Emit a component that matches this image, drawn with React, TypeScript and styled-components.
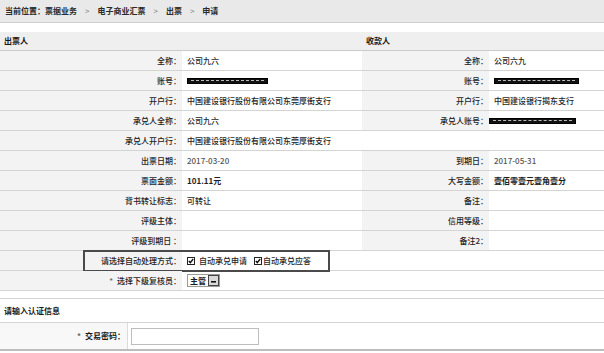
import React from "react";
import styled, { createGlobalStyle } from "styled-components";

const Global = createGlobalStyle`
  html, body { margin: 0; padding: 0; background: #fff; }
  body { font-family: "Noto Sans CJK SC", "Liberation Sans", sans-serif; font-size: 8px; color: #1e1e1e; }
  * { box-sizing: border-box; }
`;

const Page = styled.div`
  width: 604px;
  height: 353px;
  overflow: hidden;
  background: #fff;
  line-height: 1;
`;

const Breadcrumb = styled.div`
  height: 23px;
  background: #e9e9e9;
  border-bottom: 1px solid #cfcfcf;
  display: flex;
  align-items: center;
  padding-left: 5px;
  gap: 7px;
  font-weight: 700;
  color: #2a2a2a;
`;

const Crumb = styled.span``;
const Sep = styled.span`
  color: #777;
  font-weight: 400;
  padding: 0 1px;
`;

const SectionHeader = styled.div`
  margin-top: 9px;
  height: 19px;
  background: #efefef;
  border-bottom: 1px solid #cbcbcb;
  display: grid;
  grid-template-columns: 362px 1fr;
  align-items: center;
  font-weight: 700;
  color: #1a1a1a;
`;

const HeaderCell = styled.div`
  padding-left: 4px;
`;

const Row = styled.div`
  position: relative;
  display: grid;
  grid-template-columns: 182px 180px 127px 1fr;
  height: 20px;
  border-bottom: 1px solid #d4d4d4;
`;

const Label = styled.div`
  background: #f3f3f3;
  display: flex;
  align-items: center;
  justify-content: flex-end;
  padding-right: 1px;
  color: #222;
  font-weight: 500;
  white-space: nowrap;
`;

const Value = styled.div<{ $span?: number; $bold?: boolean; $muted?: boolean }>`
  grid-column: span ${(p) => p.$span ?? 1};
  display: flex;
  align-items: center;
  padding-left: 5px;
  white-space: nowrap;
  font-weight: ${(p) => (p.$bold ? 700 : 500)};
  color: ${(p) => (p.$muted ? "#555" : "#1e1e1e")};
`;

const Mask = styled.span<{ $w: number; $shift?: number }>`
  display: inline-block;
  width: ${(p) => p.$w}px;
  height: 6px;
  margin-left: ${(p) => p.$shift ?? 0}px;
  background: #111;
  border: 1px solid #000;
  position: relative;
  &::after {
    content: "";
    position: absolute;
    left: 3px;
    right: 3px;
    top: 1px;
    border-top: 1px dashed #bbb;
  }
`;

const Highlight = styled.div`
  position: absolute;
  left: 83px;
  top: -1px;
  width: 247px;
  height: 22px;
  border: 2px solid #4a4a4a;
  pointer-events: none;
`;

const Check = styled.label<{ $gap: number }>`
  display: inline-flex;
  align-items: center;
  gap: ${(p) => p.$gap}px;
  margin-right: 7px;
`;

const SelectBox = styled.span`
  display: inline-flex;
  align-items: center;
  height: 13px;
  border: 1px solid #9a9a9a;
  background: #fff;
  padding-left: 2px;
  gap: 2px;
  font-weight: 700;
  color: #1a1a1a;
`;

const SelectBtn = styled.span`
  width: 11px;
  height: 11px;
  border: 1px solid #444;
  background: #d9d9d9;
  display: inline-flex;
  align-items: center;
  justify-content: center;
`;

const Star = styled.span`
  color: #666;
  margin-right: 4px;
`;

const Divider = styled.div`
  height: 8px;
  border-bottom: 1px solid #d4d4d4;
`;

const AuthHeader = styled.div`
  height: 24px;
  border-bottom: 1px solid #d4d4d4;
  display: flex;
  align-items: center;
  padding-left: 4px;
  font-weight: 700;
  color: #1a1a1a;
`;

const AuthRow = styled.div`
  display: grid;
  grid-template-columns: 128px 1fr;
  height: 28px;
  border-bottom: 2px solid #bdbdbd;
`;

const AuthLabel = styled.div`
  background: #f8f8f8;
  border-right: 1px solid #dcdcdc;
  display: flex;
  align-items: center;
  justify-content: flex-end;
  padding-right: 2px;
  font-weight: 700;
  color: #1a1a1a;
`;

const AuthValue = styled.div`
  display: flex;
  align-items: center;
  padding-left: 3px;
`;

const Input = styled.input`
  width: 128px;
  height: 17px;
  border: 1px solid #bdbdbd;
  background: #fff;
  outline: none;
  padding: 0 3px;
  font: inherit;
`;

const CheckIcon = () => (
  <svg width="8" height="8" viewBox="0 0 8 8">
    <rect x="0.5" y="0.5" width="7" height="7" fill="#fff" stroke="#222" />
    <path d="M1.8 4 L3.3 5.6 L6.2 2" fill="none" stroke="#111" strokeWidth="1.4" />
  </svg>
);

const DownIcon = () => (
  <svg width="7" height="7" viewBox="0 0 7 7">
    <rect x="1" y="4" width="5" height="1.6" fill="#111" />
  </svg>
);

type RowData = {
  l: string;
  v?: React.ReactNode;
  rl?: string;
  rv?: React.ReactNode;
  span?: boolean;
  bold?: boolean;
  muted?: boolean;
};

const rows: RowData[] = [
  { l: "全称：", v: "公司九六", rl: "全称：", rv: "公司六九" },
  { l: "账号：", v: <Mask $w={81} />, rl: "账号：", rv: <Mask $w={85} /> },
  { l: "开户行：", v: "中国建设银行股份有限公司东莞厚街支行", rl: "开户行：", rv: "中国建设银行揭东支行" },
  { l: "承兑人全称：", v: "公司九六", rl: "承兑人账号：", rv: <Mask $w={87} $shift={-5} /> },
  { l: "承兑人开户行：", v: "中国建设银行股份有限公司东莞厚街支行", span: true },
  { l: "出票日期：", v: "2017-03-20", rl: "到期日：", rv: "2017-05-31", muted: true },
  { l: "票面金额：", v: "101.11元", rl: "大写金额：", rv: "壹佰零壹元壹角壹分", bold: true },
  { l: "背书转让标志：", v: "可转让", rl: "备注：", rv: "" },
  { l: "评级主体：", v: "", rl: "信用等级：", rv: "" },
  { l: "评级到期日 ：", v: "", rl: "备注2：", rv: "" },
];

export default function App() {
  return (
    <Page>
      <Global />
      <Breadcrumb>
        <Crumb>当前位置：票据业务</Crumb>
        <Sep>&gt;</Sep>
        <Crumb>电子商业汇票</Crumb>
        <Sep>&gt;</Sep>
        <Crumb>出票</Crumb>
        <Sep>&gt;</Sep>
        <Crumb>申请</Crumb>
      </Breadcrumb>

      <SectionHeader>
        <HeaderCell>出票人</HeaderCell>
        <HeaderCell>收款人</HeaderCell>
      </SectionHeader>

      {rows.map((r, i) => (
        <Row key={i}>
          <Label>{r.l}</Label>
          {r.span ? (
            <Value $span={3}>{r.v}</Value>
          ) : (
            <>
              <Value $bold={r.bold} $muted={r.muted}>{r.v}</Value>
              <Label>{r.rl}</Label>
              <Value $bold={r.bold} $muted={r.muted}>{r.rv}</Value>
            </>
          )}
        </Row>
      ))}

      <Row>
        <Label>请选择自动处理方式：</Label>
        <Value $span={3}>
          <Check $gap={4}>
            <CheckIcon />
            自动承兑申请
          </Check>
          <Check $gap={1}>
            <CheckIcon />
            自动承兑应答
          </Check>
        </Value>
        <Highlight />
      </Row>

      <Row>
        <Label>
          <Star>*</Star>选择下级复核员：
        </Label>
        <Value $span={3}>
          <SelectBox>
            主管
            <SelectBtn>
              <DownIcon />
            </SelectBtn>
          </SelectBox>
        </Value>
      </Row>

      <Divider />

      <AuthHeader>请输入认证信息</AuthHeader>

      <AuthRow>
        <AuthLabel>
          <Star>*</Star>交易密码：
        </AuthLabel>
        <AuthValue>
          <Input type="text" />
        </AuthValue>
      </AuthRow>
    </Page>
  );
}
